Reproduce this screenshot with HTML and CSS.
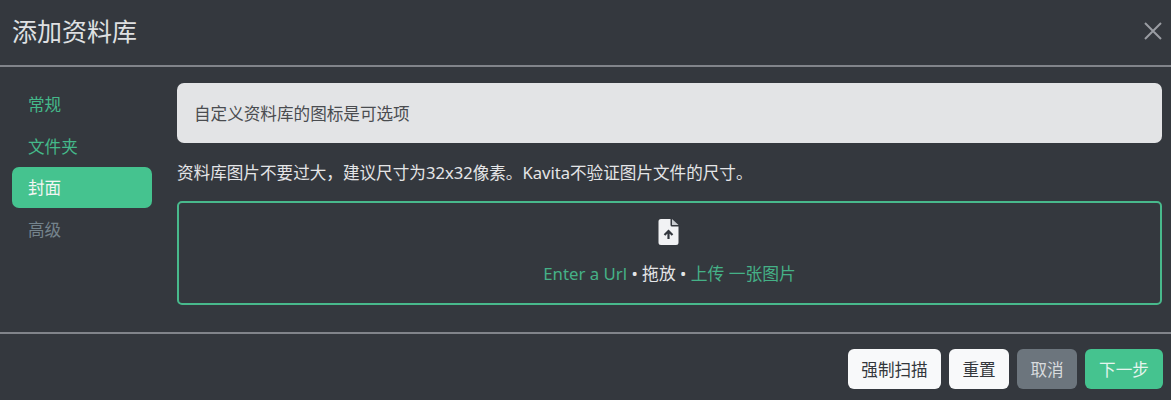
FILE: index.html
```html
<!DOCTYPE html>
<html lang="zh">
<head>
<meta charset="utf-8">
<title>添加资料库</title>
<link rel="stylesheet" href="styles.css">
</head>
<body>
<div class="modal">
  <header class="modal-header">
    <h1 class="modal-title">添加资料库</h1>
    <button class="close" aria-label="关闭">
      <svg viewBox="0 0 18 18" width="18" height="18"><path d="M1 1 17 17M17 1 1 17" stroke="#9a9da3" stroke-width="2" fill="none"/></svg>
    </button>
  </header>
  <div class="modal-body">
    <nav class="nav">
      <a class="nav-link">常规</a>
      <a class="nav-link">文件夹</a>
      <a class="nav-link active">封面</a>
      <a class="nav-link muted">高级</a>
    </nav>
    <main class="content">
      <div class="alert">自定义资料库的图标是可选项</div>
      <p class="hint">资料库图片不要过大，建议尺寸为32x32像素。Kavita不验证图片文件的尺寸。</p>
      <div class="dropzone">
        <svg class="file-icon" viewBox="0 0 20 26" width="21" height="26">
          <path d="M2.5 0H12v6a1.500 1.500 0 0 0 1.500 1.500H20V23.500a2.500 2.500 0 0 1-2.500 2.500h-15A2.500 2.500 0 0 1 0 23.500v-21A2.500 2.500 0 0 1 2.500 0Z" fill="#f1f2f4"/>
          <path d="M13.500 0 20 6h-6.500Z" fill="#c9ccd0"/>
          <path d="M10 20v-7.500M6 16l4-4 4 4" stroke="#33373e" stroke-width="2.200" fill="none"/>
        </svg>
        <div class="drop-text"><span class="green">Enter a Url</span> • 拖放 • <span class="green">上传 一张图片</span></div>
      </div>
    </main>
  </div>
  <footer class="modal-footer">
    <button class="btn light wide">强制扫描</button>
    <button class="btn light narrow">重置</button>
    <button class="btn grey narrow">取消</button>
    <button class="btn primary next">下一步</button>
  </footer>
</div>
</body>
</html>
```
FILE: styles.css
```css
* { box-sizing: border-box; }
html, body { margin: 0; height: 100%; }
body {
  background: #34383e;
  color: #e4e5e7;
  font-family: "Noto Sans", "Noto Sans CJK SC", sans-serif;
  font-size: 16.6px;
  overflow: hidden;
}
.modal { width: 1171px; height: 400px; display: flex; flex-direction: column; }
.modal-header {
  height: 67px;
  padding: 0 6px 4px 12px;
  display: flex;
  align-items: center;
  justify-content: space-between;
  border-bottom: 2px solid #81848a;
}
.modal-title { margin: 0; font-size: 25px; font-weight: 400; line-height: 34px; color: #dfe0e2; }
.close { background: none; border: 0; padding: 0; width: 24px; height: 24px; display: flex; align-items: center; justify-content: center; }
.modal-body { height: 267px; padding: 16px 9px 0 12px; display: flex; border-bottom: 2px solid #81848a; }
.nav { width: 140px; margin-right: 25px; display: flex; flex-direction: column; padding-top: 0.5px; }
.nav-link { height: 41.500px; padding-left: 16px; display: flex; align-items: center; color: #44b88a; border-radius: 7px; }
.nav-link.active { background: #45c38f; color: #f2f5f3; }
.nav-link.muted { color: #74838c; }
.content { flex: 1; display: flex; flex-direction: column; }
.alert {
  height: 60px;
  padding: 0 17px;
  display: flex;
  align-items: center;
  background: #e3e4e6;
  color: #4a4c50;
  border-radius: 7px;
}
.hint { margin: 18px 0 0; height: 24px; line-height: 24px; color: #e4e5e7; }
.dropzone {
  margin-top: 16px;
  height: 104px;
  border: 2px solid #48b98c;
  border-radius: 5px;
  display: flex;
  flex-direction: column;
  align-items: center;
  padding-top: 16px;
}
.file-icon { display: block; margin-right: 2px; }
.drop-text { margin-top: 17px; line-height: 24px; font-size: 16.800px; }
.green { color: #45b187; }
.modal-footer { flex: 1; padding: 15px 8px 0 0; display: flex; justify-content: flex-end; align-items: flex-start; gap: 8px; }
.btn {
  height: 40px;
  padding: 0;
  border: 0;
  border-radius: 6px;
  font: inherit;
  display: flex;
  align-items: center;
  justify-content: center;
}
.wide { width: 93px; }
.narrow { width: 60px; }
.next { width: 78px; }
.btn.light { background: #f8f9fa; color: #33363b; }
.btn.grey { background: #6c757d; color: #d8dbde; }
.btn.primary { background: #45c38f; color: #e5f5ee; }
```
